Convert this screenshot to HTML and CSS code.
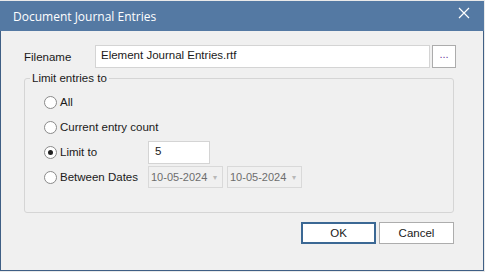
FILE: index.html
```html
<!DOCTYPE html>
<html>
<head>
  <title>Document Journal Entries</title>
  <link rel="stylesheet" href="styles.css">
</head>
<body>
  <div class="window">
    <div class="titlebar">
      <span class="title">Document Journal Entries</span>
      <svg class="close" width="12" height="12" viewBox="0 0 12 12">
        <path d="M1 1 L11 11 M11 1 L1 11" stroke="#fff" stroke-width="1.2" fill="none"/>
      </svg>
    </div>

    <div class="content">
      <div class="file-row">
        <label class="file-label">Filename</label>
        <div class="text-box file-box">Element Journal Entries.rtf</div>
        <div class="browse-btn">...</div>
      </div>

      <fieldset class="group">
        <legend>Limit entries to</legend>
        <div class="options">
          <div class="radio-row">
            <span class="radio"></span><span class="radio-text">All</span>
          </div>
          <div class="radio-row">
            <span class="radio"></span><span class="radio-text">Current entry count</span>
          </div>
          <div class="radio-row">
            <span class="radio checked"></span><span class="radio-text wide">Limit to</span>
            <div class="text-box limit-box">5</div>
          </div>
          <div class="radio-row">
            <span class="radio"></span><span class="radio-text wide">Between Dates</span>
            <div class="date-box">10-05-2024 <span class="arrow">&#9662;</span></div>
            <div class="date-box">10-05-2024 <span class="arrow">&#9662;</span></div>
          </div>
        </div>
      </fieldset>

      <div class="buttons">
        <div class="btn default">OK</div>
        <div class="btn">Cancel</div>
      </div>
    </div>
  </div>
</body>
</html>
```

FILE: styles.css
```css
body { margin: 0; background: #e9e9e9; font-family: "Liberation Sans", Arial, sans-serif; font-size: 11.5px; color: #1a1a1a; }
.window { box-sizing: border-box; width: 484px; height: 270px; margin-top: 1px; background: #f0f0f0; border: 1px solid #3f5f85; border-top: none; }
.titlebar { height: 30px; background: #5479a3; display: flex; align-items: center; justify-content: space-between; padding: 0 14px 0 12px; margin: 0 -1px 0 -1px; }
.title { color: #fff; font-family: "Open Sans", sans-serif; font-size: 12px; padding-left: 1px; padding-top: 1px; }
.close { margin-bottom: 6px; }
.content { padding: 14px 0 0 23px; }
.file-row { display: flex; align-items: center; }
.file-label { width: 71px; }
.text-box { box-sizing: border-box; background: #fff; border: 1px solid #d4d4d4; padding: 3px 5px; }
.file-box { width: 335px; height: 23px; }
.browse-btn { box-sizing: border-box; width: 24px; height: 23px; margin-left: 2px; border: 1px solid #acacac; background: #fff; text-align: center; line-height: 17px; color: #6a3f9c; font-size: 11px; }
.group { box-sizing: border-box; width: 430px; height: 141px; margin: 4px 0 0 0; padding: 0; border: 1px solid #d5d5d5; border-radius: 3px; }
.group legend { padding: 0 2px; margin-left: 5px; }
.options { padding: 5px 0 0 19px; }
.radio-row { display: flex; align-items: center; height: 24px; margin-top: 1px; }
.radio { box-sizing: border-box; width: 13px; height: 13px; border: 1px solid #8a8a8a; border-radius: 50%; background: #fff; margin-right: 3px; display: flex; align-items: center; justify-content: center; }
.radio.checked::after { content: ""; width: 5px; height: 5px; border-radius: 50%; background: #222; }
.radio-text.wide { width: 88px; }
.limit-box { width: 62px; height: 23px; padding-left: 6px; }
.date-box { box-sizing: border-box; width: 75px; height: 22px; border: 1px solid #d9d9d9; background: #f0f0f0; color: #6d6d6d; padding: 3px 2px; margin-right: 4px; white-space: nowrap; display: flex; align-items: center; font-size: 11px; }
.date-box .arrow { color: #b8b8b8; font-size: 8px; margin-left: 6px; }
.buttons { display: flex; justify-content: flex-end; gap: 3px; margin: 9px 29px 0 0; }
.btn { box-sizing: border-box; width: 75px; height: 22px; border: 1px solid #adadad; background: #fff; text-align: center; line-height: 20px; }
.btn.default { border: 2px solid #3b6894; line-height: 18px; }
```
